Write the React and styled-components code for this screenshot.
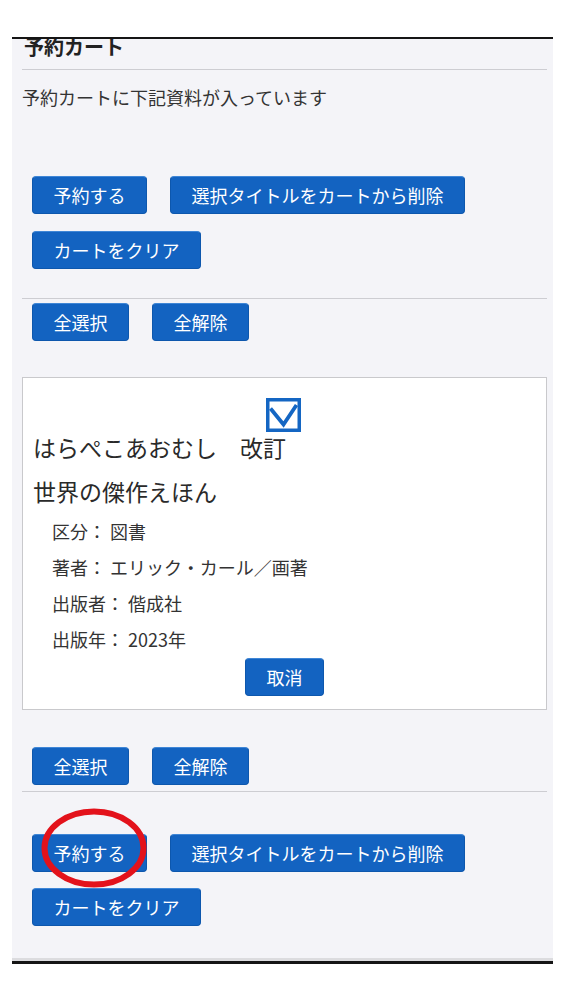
import React from 'react';
import styled, { createGlobalStyle } from 'styled-components';

const GlobalStyle = createGlobalStyle`
body {
    margin: 0;
    background: #fff;
    font-family: "Noto Sans CJK JP", "Noto Sans", sans-serif;
    color: #333;
}
`

const Frame = styled.div`
width: 541px;
margin: 37px 0 0 12px;
box-sizing: border-box;
padding: 0 6px 35px 10px;
background: #f4f4f8;
border-top: 2px solid #151515;
border-bottom: 3px solid #151515;
box-shadow: inset 0 -3px 0 #dcdcdf;
overflow: hidden;
`

const Heading = styled.h2`
margin: -2px 0 0 2px;
font-size: 20px;
line-height: 20px;
font-weight: bold;
color: #222;
`

const Rule = styled.hr`
margin: ${props => props.top}px 0 0;
border: 0;
border-top: 1px solid #cdcdd2;
`

const Lead = styled.p`
margin: 18px 0 0;
font-size: 18px;
line-height: 18px;
`

const ButtonRow = styled.div`
display: flex;
flex-wrap: wrap;
column-gap: 23px;
row-gap: ${props => props.rowGap || 17}px;
margin: ${props => props.top}px 0 0 10px;
`

const Button = styled.button`
position: relative;
height: 38px;
padding: 0 20.5px;
border: 1px solid #0d57ad;
border-top-color: #3f86d6;
border-radius: 4px;
background: #1363c1;
color: #fff;
font-family: inherit;
font-size: 18px;
line-height: 36px;
white-space: nowrap;
`

const Mark = styled.svg`
position: absolute;
left: 8px;
top: -27px;
pointer-events: none;
`

const Card = styled.div`
margin-top: 36px;
padding: 20px 10px 13px;
background: #fff;
border: 1px solid #c9c9cc;
`

const CheckWrap = styled.div`
display: flex;
justify-content: center;
padding-right: 3px;
`

const Title = styled.div`
margin-top: -7px;
font-size: 23px;
line-height: 44px;
color: #2a2a2a;
`

const Details = styled.dl`
margin: 0 0 0 19px;
font-size: 18px;
line-height: 36px;
`

const Detail = styled.div`
display: flex;
dt, dd { margin: 0; }
dd { margin-left: 4px; }
`

const CancelRow = styled.div`
display: flex;
justify-content: center;
margin-top: 1px;
`

const CheckBox = () => (
    <svg width="35" height="34" viewBox="0 0 35 34">
        <rect x="1.75" y="1.75" width="31.5" height="30.5" fill="#fff" stroke="#1466c3" strokeWidth="3.5" />
        <polyline points="4.5,10.5 17.5,26.5 30.5,7" fill="none" stroke="#1466c3" strokeWidth="3.8" />
    </svg>
);

const RedCircle = () => (
    <Mark width="106" height="80" viewBox="0 0 106 80">
        <ellipse cx="53" cy="40" rx="49.5" ry="36.5" fill="none" stroke="#e3121b" strokeWidth="6" />
    </Mark>
);

const details = [
    ['区分：', '図書'],
    ['著者：', 'エリック・カール／画著'],
    ['出版者：', '偕成社'],
    ['出版年：', '2023年'],
];

export default function App() {
    return (
        <>
            <GlobalStyle />
            <Frame>
                <Heading>予約カート</Heading>
                <Rule top={12} />
                <Lead>予約カートに下記資料が入っています</Lead>

                <ButtonRow top={70}>
                    <Button>予約する</Button>
                    <Button>選択タイトルをカートから削除</Button>
                    <Button>カートをクリア</Button>
                </ButtonRow>

                <Rule top={29} />
                <ButtonRow top={4}>
                    <Button>全選択</Button>
                    <Button>全解除</Button>
                </ButtonRow>

                <Card>
                    <CheckWrap><CheckBox /></CheckWrap>
                    <Title>
                        <div>はらぺこあおむし　改訂</div>
                        <div>世界の傑作えほん</div>
                    </Title>
                    <Details>
                        {details.map(([label, value]) => (
                            <Detail key={label}>
                                <dt>{label}</dt>
                                <dd>{value}</dd>
                            </Detail>
                        ))}
                    </Details>
                    <CancelRow>
                        <Button>取消</Button>
                    </CancelRow>
                </Card>

                <ButtonRow top={37}>
                    <Button>全選択</Button>
                    <Button>全解除</Button>
                </ButtonRow>
                <Rule top={6} />

                <ButtonRow top={42} rowGap={16}>
                    <Button>
                        予約する
                        <RedCircle />
                    </Button>
                    <Button>選択タイトルをカートから削除</Button>
                    <Button>カートをクリア</Button>
                </ButtonRow>
            </Frame>
        </>
    );
}
